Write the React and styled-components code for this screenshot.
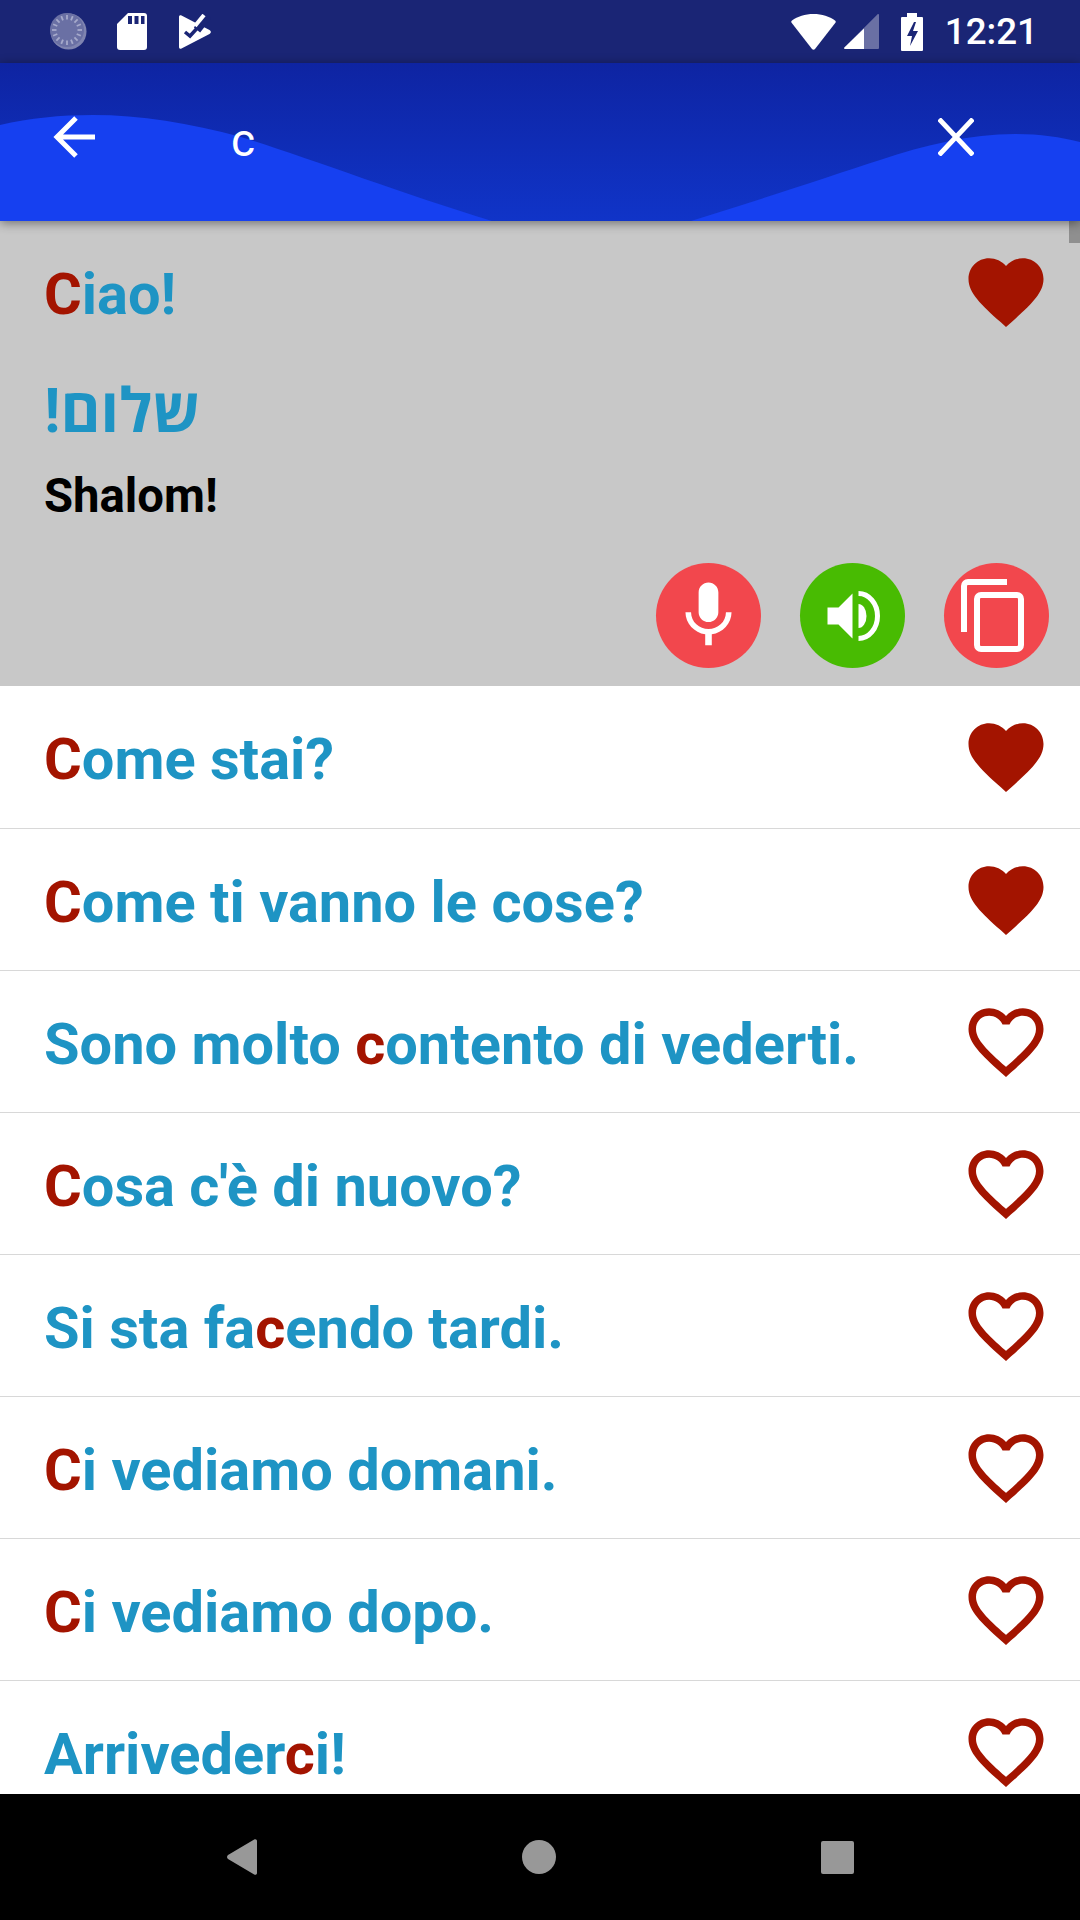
import React from 'react';
import styled, { createGlobalStyle } from 'styled-components';

const GlobalStyle = createGlobalStyle`
    html, body {
        margin: 0;
        padding: 0;
        background: #fff;
    }
    * {
        box-sizing: border-box;
    }
`;

const Page = styled.div`
    width: 1080px;
    height: 1920px;
    display: flex;
    flex-direction: column;
    overflow: hidden;
    font-family: Roboto, "Noto Sans", sans-serif;
`;

const StatusBar = styled.div`
    height: 63px;
    flex: none;
    background: #1a2575;
    display: flex;
    align-items: center;
    justify-content: space-between;
    padding: 0 42px 0 50px;
`;

const StatusGroup = styled.div`
    display: flex;
    align-items: center;
    gap: ${(p) => p.$gap}px;
`;

const Clock = styled.span`
    color: #fff;
    font-size: 36.75px;
    font-weight: 500;
    line-height: 63px;
`;

const AppBar = styled.div`
    position: relative;
    z-index: 2;
    height: 158px;
    flex: none;
    display: flex;
    align-items: center;
    padding: 0 106px 10px 53px;
    background: linear-gradient(180deg, #0e24a2 0%, #1034c8 100%);
    box-shadow: 0 2px 10px rgba(0, 0, 0, 0.45);
`;

const Wave = styled.svg`
    position: absolute;
    left: 0;
    top: 0;
    width: 100%;
    height: 100%;
`;

const BarIcon = styled.svg`
    position: relative;
    flex: none;
`;

const SearchText = styled.span`
    position: relative;
    flex: 1;
    margin-left: 136px;
    color: #fff;
    font-size: 46px;
    line-height: 50px;
    padding-top: 6px;
`;

const List = styled.div`
    position: relative;
    flex: 1;
    min-height: 0;
    overflow: hidden;
    background: #fff;
`;

const ScrollThumb = styled.div`
    position: absolute;
    top: 0;
    right: 0;
    width: 11px;
    height: 22px;
    background: #8f8f8f;
`;

const Panel = styled.div`
    height: 465px;
    background: #c8c8c8;
    padding: 0 29px 18px 44px;
    display: flex;
    flex-direction: column;
`;

const PanelHead = styled.div`
    height: 142px;
    display: flex;
    align-items: center;
    justify-content: space-between;
`;

const Phrase = styled.span`
    display: block;
    padding-top: 4px;
    font-size: 57.75px;
    font-weight: 700;
    line-height: 68px;
    color: #1e94c4;
    white-space: nowrap;
`;

const Match = styled.span`
    color: #a31400;
`;

const Hebrew = styled.div`
    font-size: 61px;
    font-weight: 700;
    line-height: 68px;
    color: #1e94c4;
    margin-top: 14px;
    font-family: Roboto, "Open Sans", "Liberation Sans", sans-serif;
`;

const Transliteration = styled.div`
    font-size: 47.25px;
    font-weight: 700;
    line-height: 56px;
    color: #000;
    margin-top: 23px;
`;

const Actions = styled.div`
    margin-top: auto;
    display: flex;
    justify-content: flex-end;
    gap: 39px;
    padding-right: 2px;
`;

const RoundButton = styled.button`
    width: 105px;
    height: 105px;
    border: 0;
    padding: 0;
    border-radius: 50%;
    background: ${(p) => p.$color};
    display: flex;
    align-items: center;
    justify-content: center;
`;

const Row = styled.div`
    height: 142px;
    border-top: ${(p) => (p.$first ? '0' : '1px solid #d8d8d8')};
    padding: 0 29px 0 44px;
    display: flex;
    align-items: center;
    justify-content: space-between;
`;

const HeartIcon = styled.svg`
    width: 90px;
    height: 90px;
    flex: none;
    fill: #a31400;
`;

const NavBar = styled.div`
    height: 126px;
    flex: none;
    background: #000;
    display: flex;
    align-items: center;
    justify-content: center;
    gap: 265px;
    position: relative;
    z-index: 1;
`;

const phrases = [
    { text: 'Come stai?', liked: true },
    { text: 'Come ti vanno le cose?', liked: true },
    { text: 'Sono molto contento di vederti.', liked: false },
    { text: "Cosa c'è di nuovo?", liked: false },
    { text: 'Si sta facendo tardi.', liked: false },
    { text: 'Ci vediamo domani.', liked: false },
    { text: 'Ci vediamo dopo.', liked: false },
    { text: 'Arrivederci!', liked: false },
];

const Highlighted = ({ text }) => {
    const at = text.toLowerCase().indexOf('c');
    return (
        <Phrase>
            {text.slice(0, at)}
            <Match>{text[at]}</Match>
            {text.slice(at + 1)}
        </Phrase>
    );
};

const Heart = ({ filled }) => (
    <HeartIcon viewBox="0 0 24 24">
        {filled ? (
            <path d="M12 21.35l-1.45-1.32C5.4 15.36 2 12.28 2 8.5 2 5.42 4.42 3 7.5 3c1.74 0 3.41.81 4.5 2.09C13.09 3.81 14.76 3 16.5 3 19.58 3 22 5.42 22 8.5c0 3.78-3.4 6.86-8.55 11.54L12 21.35z" />
        ) : (
            <path d="M16.5 3c-1.74 0-3.41.81-4.5 2.09C10.91 3.81 9.24 3 7.5 3 4.42 3 2 5.42 2 8.5c0 3.78 3.4 6.86 8.55 11.54L12 21.35l1.45-1.32C18.6 15.36 22 12.28 22 8.5 22 5.42 19.58 3 16.5 3zm-4.4 15.55l-.1.1-.1-.1C7.14 14.24 4 11.39 4 8.5 4 6.5 5.5 5 7.5 5c1.54 0 3.04.99 3.57 2.36h1.87C13.46 5.99 14.96 5 16.5 5c2 0 3.5 1.5 3.5 3.5 0 2.89-3.14 5.74-7.9 10.05z" />
        )}
    </HeartIcon>
);

const ticks = Array.from({ length: 16 }, (_, i) => i * 22.5);

const StatusIcons = () => (
    <StatusGroup $gap={30}>
        <svg width="37" height="37" viewBox="0 0 37 37">
            <circle cx="18.500" cy="18.500" r="18" fill="#7f84b0" />
            <path d="M35 24a17 17 0 0 1-24 10a17 17 0 0 0 24-10z" fill="#fff" />
            <circle cx="17" cy="17" r="17" fill="#6a70a4" />
            {ticks.map((a) => (
                <line key={a} x1="17" y1="2" x2="17" y2="6.500" stroke="#a6aacb" strokeWidth="1.8" transform={`rotate(${a} 17 17)`} />
            ))}
        </svg>
        <svg width="30" height="37" viewBox="0 0 30 37">
            <path d="M11 0h16a3 3 0 0 1 3 3v31a3 3 0 0 1-3 3H3a3 3 0 0 1-3-3V11z" fill="#fff" />
            <path d="M11 3h4v8h-4zM17.500 3h4v8h-4zM24 3h3.500v8H24z" fill="#1a2575" />
        </svg>
        <svg width="34" height="36" viewBox="0 0 34 36">
            <path d="M2 3c0-1.500 1.200-2.200 2.500-1.500L32.500 16c1.800 1 1.800 3 0 4L4.500 34.500C3.200 35.200 2 34.500 2 33z" fill="#fff" />
            <path d="M20 16L31 2" stroke="#1a2575" strokeWidth="8" fill="none" />
            <path d="M8 18l5 4 L24 10" stroke="#1a2575" strokeWidth="3.500" fill="none" />
            <path d="M18 12L27 1" stroke="#fff" strokeWidth="4" fill="none" />
        </svg>
    </StatusGroup>
);

const SystemIcons = () => (
    <StatusGroup $gap={22}>
        <StatusGroup $gap={8}>
            <svg width="45" height="36" viewBox="0 0 45 36">
                <path d="M22.500 0C14 0 6.500 2.500 1 6.500c-.8.6-1 1.500-.4 2.300L21 35c.8 1 2.200 1 3 0L44.400 8.800c.6-.8.400-1.700-.4-2.300C38.500 2.500 31 0 22.500 0z" fill="#fff" />
            </svg>
            <svg width="35" height="35" viewBox="0 0 35 35">
                <path d="M35 1v33a1 1 0 0 1-1 1H1c-.8 0-1.200-.8-.6-1.400L33.400.4C34 -.2 35 .2 35 1z" fill="#6a70a4" />
                <path d="M20 14.500V35H1c-.8 0-1.200-.8-.6-1.400z" fill="#fff" />
            </svg>
        </StatusGroup>
        <svg width="22" height="38" viewBox="0 0 22 38">
            <path d="M6 0h10v4h5a1 1 0 0 1 1 1v32a1 1 0 0 1-1 1H1a1 1 0 0 1-1-1V5a1 1 0 0 1 1-1h5z" fill="#fff" />
            <path d="M13 9l-7 14h5l-2 10 8-15h-5l3-9z" fill="#1a2575" />
        </svg>
        <Clock>12:21</Clock>
    </StatusGroup>
);

const App = () => {
    return (
        <Page>
            <GlobalStyle />
            <StatusBar>
                <StatusIcons />
                <SystemIcons />
            </StatusBar>
            <AppBar>
                <Wave viewBox="0 0 1080 158" preserveAspectRatio="none">
                    <path
                        d="M0 62C30 55 60 52 93 52C140 52 190 60 241 74C300 92 400 130 492 158L691 158C760 137 830 113 880 97C925 82 970 71 1015 71C1040 71 1060 74 1080 79L1080 158L0 158Z"
                        fill="#1640f0"
                    />
                </Wave>
                <BarIcon width="42" height="42" viewBox="0 0 42 42" fill="none" stroke="#fff" strokeWidth="5">
                    <path d="M42 21H4M23 2L4 21l19 19" />
                </BarIcon>
                <SearchText>c</SearchText>
                <BarIcon width="36" height="38" viewBox="0 0 36 38" fill="none" stroke="#fff" strokeWidth="5">
                    <path d="M1 1l34 36M35 1L1 37" />
                </BarIcon>
            </AppBar>
            <List>
                <ScrollThumb />
                <Panel>
                    <PanelHead>
                        <Highlighted text="Ciao!" />
                        <Heart filled />
                    </PanelHead>
                    <Hebrew><span dir="rtl">שלום!</span></Hebrew>
                    <Transliteration>Shalom!</Transliteration>
                    <Actions>
                        <RoundButton $color="#f2474d">
                            <svg width="79" height="79" viewBox="0 0 24 24" fill="#fff">
                                <path d="M12 14c1.660 0 2.990-1.340 2.990-3L15 5c0-1.660-1.340-3-3-3S9 3.340 9 5v6c0 1.660 1.340 3 3 3zm5.300-3c0 3-2.540 5.100-5.300 5.100S6.700 14 6.700 11H5c0 3.410 2.720 6.230 6 6.720V21h2v-3.280c3.280-.48 6-3.300 6-6.720h-1.700z" />
                            </svg>
                        </RoundButton>
                        <RoundButton $color="#48bb02">
                            <svg width="60" height="60" viewBox="0 0 60 60" fill="#fff">
                                <path d="M4.500 21.500h11l14-14v45l-14-14h-11z" />
                                <path d="M35.500 18A8 12 0 0 1 35.500 42z" />
                                <path d="M35.500 7.500A19 22.500 0 0 1 35.500 52.500" fill="none" stroke="#fff" strokeWidth="5" />
                            </svg>
                        </RoundButton>
                        <RoundButton $color="#f2474d">
                            <svg width="105" height="105" viewBox="0 0 105 105" fill="none" stroke="#fff" strokeWidth="6">
                                <path d="M20 69V23a4 4 0 0 1 4-4h39" />
                                <rect x="33" y="32" width="44" height="54" rx="4" />
                            </svg>
                        </RoundButton>
                    </Actions>
                </Panel>
                {phrases.map((item, i) => (
                    <Row key={item.text} $first={i === 0}>
                        <Highlighted text={item.text} />
                        <Heart filled={item.liked} />
                    </Row>
                ))}
            </List>
            <NavBar>
                <svg width="30" height="36" viewBox="0 0 30 36" fill="#989898">
                    <path d="M30 2v32c0 1.600-1.600 2.400-2.800 1.400L1 20c-1.300-1-1.300-3 0-4L27.200.6C28.400-.4 30 .4 30 2z" />
                </svg>
                <svg width="34" height="34" viewBox="0 0 34 34" fill="#989898">
                    <circle cx="17" cy="17" r="17" />
                </svg>
                <svg width="33" height="33" viewBox="0 0 33 33" fill="#989898">
                    <rect width="33" height="33" rx="2" />
                </svg>
            </NavBar>
        </Page>
    );
};

export default App;
